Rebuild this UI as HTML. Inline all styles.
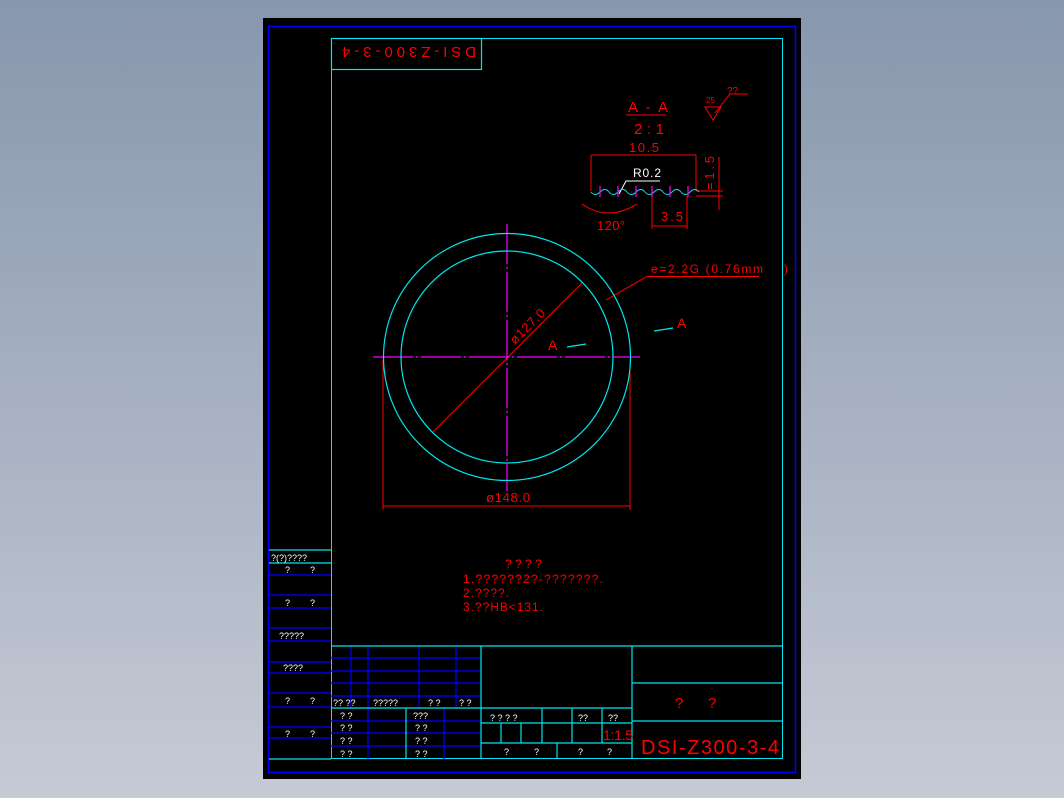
<!DOCTYPE html>
<html><head><meta charset="utf-8"><style>
html,body{margin:0;padding:0;width:1064px;height:798px;overflow:hidden;background:linear-gradient(#8797ad,#c6cad5);}
svg{position:absolute;left:0;top:0}
text{font-family:"Liberation Sans",sans-serif}
</style></head><body>
<svg width="1064" height="798" viewBox="0 0 1064 798">
<rect x="263" y="18" width="538" height="761" fill="#000"/>
<rect x="268.5" y="26.5" width="527" height="746" fill="none" stroke="#0000ff" stroke-width="1.5"/>
<rect x="331.5" y="38.5" width="451" height="720" fill="none" stroke="#00e5ee"/>
<g stroke="#0000ff" stroke-width="1.2">
<line x1="269" y1="575" x2="331" y2="575"/><line x1="269" y1="595" x2="331" y2="595"/>
<line x1="269" y1="608" x2="331" y2="608"/><line x1="269" y1="628" x2="331" y2="628"/>
<line x1="269" y1="641" x2="331" y2="641"/><line x1="269" y1="662" x2="331" y2="662"/>
<line x1="269" y1="673" x2="331" y2="673"/><line x1="269" y1="693" x2="331" y2="693"/>
<line x1="269" y1="707" x2="331" y2="707"/><line x1="269" y1="727" x2="331" y2="727"/>
<line x1="269" y1="738" x2="331" y2="738"/>
<line x1="331" y1="658" x2="481" y2="658"/><line x1="331" y1="671" x2="481" y2="671"/>
<line x1="331" y1="683" x2="481" y2="683"/><line x1="331" y1="696" x2="481" y2="696"/>
<line x1="331" y1="721" x2="481" y2="721"/><line x1="331" y1="733" x2="481" y2="733"/>
<line x1="331" y1="746" x2="481" y2="746"/>
<line x1="351" y1="646" x2="351" y2="708"/><line x1="368" y1="646" x2="368" y2="759"/>
<line x1="419" y1="646" x2="419" y2="708"/><line x1="456" y1="646" x2="456" y2="708"/>
<line x1="444" y1="708" x2="444" y2="759"/>
</g>
<g stroke="#00e5ee" stroke-width="1.2" fill="none">
<line x1="269" y1="550" x2="331" y2="550"/><line x1="269" y1="563" x2="331" y2="563"/>
<line x1="269" y1="759" x2="331" y2="759"/>
<line x1="331" y1="646" x2="782" y2="646"/>
<line x1="331" y1="708" x2="632" y2="708"/>
<line x1="481" y1="646" x2="481" y2="759"/><line x1="406" y1="708" x2="406" y2="759"/>
<line x1="632" y1="646" x2="632" y2="759"/>
<line x1="632" y1="683" x2="782" y2="683"/><line x1="632" y1="721" x2="782" y2="721"/>
<line x1="481" y1="723" x2="632" y2="723"/><line x1="481" y1="743" x2="632" y2="743"/>
<line x1="542" y1="708" x2="542" y2="743"/><line x1="572" y1="708" x2="572" y2="743"/>
<line x1="602" y1="708" x2="602" y2="743"/><line x1="501" y1="723" x2="501" y2="743"/>
<line x1="521" y1="723" x2="521" y2="743"/><line x1="557" y1="743" x2="557" y2="759"/>
<rect x="331.5" y="38.5" width="150" height="31"/>
</g>
<g fill="#fff" font-size="9">
<text x="271" y="561">?(?)????</text>
<text x="285" y="573">?</text><text x="310" y="573">?</text>
<text x="285" y="606">?</text><text x="310" y="606">?</text>
<text x="279" y="639">?????</text>
<text x="283" y="671">????</text>
<text x="285" y="704">?</text><text x="310" y="704">?</text>
<text x="285" y="737">?</text><text x="310" y="737">?</text>
<text x="333" y="706">?? ??</text><text x="373" y="706">?????</text>
<text x="428" y="706">?  ?</text><text x="459" y="706">?  ?</text>
<text x="340" y="719">?  ?</text><text x="340" y="731">?  ?</text><text x="340" y="744">?  ?</text><text x="340" y="757">?  ?</text>
<text x="413" y="719">???</text><text x="415" y="731">?  ?</text><text x="415" y="744">?  ?</text><text x="415" y="757">?  ?</text>
<text x="490" y="721">?  ?  ?  ?</text><text x="578" y="721">??</text><text x="608" y="721">??</text>
<text x="504" y="755">?</text><text x="534" y="755">?</text><text x="578" y="755">?</text><text x="607" y="755">?</text>
<text x="633" y="177" font-size="12" textLength="28">R0.2</text>
</g>
<text transform="translate(476,44) rotate(180)" y="-3" font-size="15" fill="#f00" textLength="134">DSI-Z300-3-4</text>
<g fill="#f00" font-size="11">
<text x="505" y="568" font-size="12">?  ?  ?  ?</text>
<text x="463" y="583" font-size="12" textLength="140">1.??????2?-???????.</text>
<text x="463" y="597" font-size="12" textLength="46">2.????.</text>
<text x="463" y="611" font-size="12" textLength="80">3.??HB&lt;131.</text>
<text x="603" y="740" font-size="14" textLength="30">1:1.5</text>
<text x="675" y="708" font-size="15">?</text><text x="708" y="708" font-size="15">?</text>
<text x="641" y="754" font-size="20" textLength="138">DSI-Z300-3-4</text>
<text x="628" y="112" font-size="15" textLength="40">A-A</text>
<text x="634" y="134" font-size="15" textLength="30">2:1</text>
<text x="629" y="152" font-size="13" textLength="30">10.5</text>
<text x="706" y="103" font-size="8">25</text><text x="727" y="94" font-size="10">??</text>
<text x="597" y="230" font-size="13" textLength="28">120°</text>
<text x="661" y="221" font-size="13" textLength="22">3.5</text>
<text transform="translate(714,190) rotate(-90)" font-size="13" textLength="34">=1.5</text>
<text x="651" y="273" font-size="12" textLength="112">e=2.2G (0.76mm</text><text x="784" y="273" font-size="12">)</text>
<text x="548" y="350" font-size="14">A</text><text x="677" y="328" font-size="14">A</text>
<text x="486" y="502" font-size="13" textLength="44">ø148.0</text>
<text transform="translate(515,345) rotate(-45)" font-size="13" textLength="44">ø127.0</text>
</g>
<g fill="none" stroke="#f00" stroke-width="1">
<line x1="626" y1="115" x2="666" y2="115"/>
<path d="M705,107 L713,120 L721,107 Z M715,113 L730,94 L748,94"/>
<line x1="591" y1="155" x2="696" y2="155"/><line x1="591" y1="155" x2="591" y2="191"/><line x1="696" y1="155" x2="696" y2="191"/>
<line x1="696" y1="191" x2="723" y2="191"/><line x1="696" y1="196" x2="723" y2="196"/><line x1="719" y1="157" x2="719" y2="210"/>
<line x1="652" y1="196" x2="652" y2="229"/><line x1="687" y1="196" x2="687" y2="229"/><line x1="652" y1="226" x2="687" y2="226"/>
<path d="M582,204 Q608,222 637,204"/>
<line x1="432" y1="433" x2="582" y2="283"/>
<line x1="606" y1="300" x2="646" y2="277"/><line x1="646" y1="276.5" x2="759" y2="276.5"/>
<line x1="383" y1="360" x2="383" y2="510"/><line x1="630" y1="360" x2="630" y2="510"/>
<line x1="383" y1="506" x2="630" y2="506"/>
</g>
<path d="M619,194 L626,181 L660,181" stroke="#fff" fill="none"/>
<path d="M591,192 q4,5 9,0 t9,0 t9,0 t9,0 t9,0 t9,0 t9,0 t9,0 t9,0 t9,0 t9,0 t9,0" stroke="#00e5ee" fill="none"/>
<g stroke="#f0f" stroke-width="1.2">
<line x1="600" y1="186" x2="600" y2="197"/><line x1="618" y1="186" x2="618" y2="197"/><line x1="636" y1="186" x2="636" y2="197"/>
<line x1="652" y1="186" x2="652" y2="197"/><line x1="670" y1="186" x2="670" y2="197"/><line x1="688" y1="186" x2="688" y2="197"/>
<line x1="507" y1="224" x2="507" y2="491" stroke-dasharray="40,3,2,3"/>
<line x1="373" y1="357" x2="640" y2="357" stroke-dasharray="40,3,2,3"/>
</g>
<g fill="none" stroke="#00e5ee" stroke-width="1.2">
<circle cx="507" cy="357" r="123.5"/><circle cx="507" cy="357" r="106"/>
<line x1="567" y1="347" x2="586" y2="344"/><line x1="654" y1="331" x2="673" y2="328"/>
</g>
</svg>
</body></html>
